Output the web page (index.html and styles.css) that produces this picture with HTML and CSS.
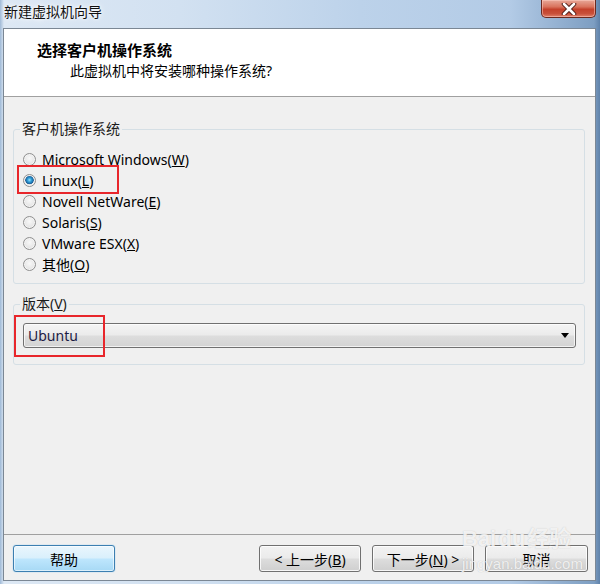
FILE: index.html
```html
<!DOCTYPE html>
<html lang="zh-CN">
<head>
    <meta charset="UTF-8">
    <title>新建虚拟机向导</title>
    <link rel="stylesheet" href="styles.css">
</head>
<body>

    <div class="window">
        <div class="titlebar">
            <span class="title">新建虚拟机向导</span>
            <div class="close-btn">
                <svg width="20" height="12" viewBox="0 0 20 12">
                    <path d="M5 1 L15 11 M15 1 L5 11" stroke="#4a1a14" stroke-width="4.5" stroke-linecap="round"/>
                    <path d="M5 1 L15 11 M15 1 L5 11" stroke="#ffffff" stroke-width="2.6" stroke-linecap="round"/>
                </svg>
            </div>
        </div>

        <div class="client">
            <!-- Header -->
            <div class="header">
                <h1>选择客户机操作系统</h1>
                <p>此虚拟机中将安装哪种操作系统?</p>
            </div>

            <!-- Guest OS -->
            <fieldset class="group os-group">
                <legend>客户机操作系统</legend>
                <label class="radio"><span class="dot"></span><span>Microsoft Windows(<u>W</u>)</span></label>
                <label class="radio marked"><span class="dot checked"></span><span>Linux(<u>L</u>)</span></label>
                <label class="radio"><span class="dot"></span><span>Novell NetWare(<u>E</u>)</span></label>
                <label class="radio"><span class="dot"></span><span>Solaris(<u>S</u>)</span></label>
                <label class="radio"><span class="dot"></span><span>VMware ESX(<u>X</u>)</span></label>
                <label class="radio"><span class="dot"></span><span>其他(<u>O</u>)</span></label>
            </fieldset>

            <!-- Version -->
            <fieldset class="group version-group">
                <legend>版本(<u>V</u>)</legend>
                <div class="select marked">
                    <span>Ubuntu</span>
                    <span class="arrow"></span>
                </div>
            </fieldset>

            <div class="footer">
                <button class="btn btn-default">帮助</button>
                <div class="nav-buttons">
                    <button class="btn">&lt; 上一步(<u>B</u>)</button>
                    <button class="btn">下一步(<u>N</u>) &gt;</button>
                    <button class="btn btn-cancel">取消</button>
                </div>
            </div>
        </div>

        <div class="watermark">
            <div class="wm-logo">Bai<span class="paw">du</span>经验</div>
            <div class="wm-url">jingyan.baidu.com</div>
        </div>
    </div>

</body>
</html>
```

FILE: styles.css
```css
body {
    margin: 0;
    width: 600px;
    height: 584px;
    overflow: hidden;
    font-family: "Noto Sans", "Noto Sans CJK SC", sans-serif;
    font-size: 14px;
    color: #000;
}

.window {
    position: relative;
    width: 600px;
    height: 584px;
    box-sizing: border-box;
    display: flex;
    flex-direction: column;
    background: linear-gradient(to right, #9fb9d6 0px, #dde8f4 4px, #d2e1f1 30%, #bcd2ea 60%, #b3cbe6 85%, #7d9ec2 99%, #5f82aa 100%);
}

.titlebar {
    height: 28px;
    display: flex;
    justify-content: space-between;
    align-items: flex-start;
    flex-shrink: 0;
}

.title {
    padding: 2px 0 0 4px;
    line-height: 20px;
    color: #101010;
    text-shadow: 0 0 6px #ffffff, 0 0 3px #ffffff;
}

.close-btn {
    width: 55px;
    height: 18px;
    margin-right: 4px;
    box-sizing: border-box;
    border: 1px solid #6b2a20;
    border-top: none;
    border-radius: 0 0 5px 5px;
    background: linear-gradient(to bottom, #e8a898 0%, #d9735d 40%, #c4412b 55%, #c8503a 80%, #e0806a 100%);
    box-shadow: inset 0 0 0 1px rgba(255, 210, 200, 0.5);
    display: flex;
    justify-content: center;
    align-items: center;
}

.client {
    flex: 1;
    margin: 0 4px 3px 3px;
    border: 1px solid #7b8794;
    background: #f0f0f0;
    display: flex;
    flex-direction: column;
}

.header {
    height: 68px;
    background: #fff;
    border-bottom: 1px solid #a0a0a0;
    padding: 11px 0 0 33px;
    box-sizing: border-box;
    flex-shrink: 0;
}

.header h1 {
    margin: 0;
    font-size: 15px;
    font-weight: bold;
    line-height: 20px;
}

.header p {
    margin: 1px 0 0 33px;
    line-height: 20px;
}

.group {
    margin: 22px 10px 0 9px;
    border: 1px solid #d5dfe5;
    border-radius: 3px;
    padding: 10px 8px 8px 9px;
    min-width: 0;
}

.group legend {
    margin-left: -3px;
    padding: 0 2px;
    line-height: 20px;
    color: #1a1a1a;
}

.version-group {
    margin-top: 10px;
    padding: 9px 8px 16px 9px;
}

.radio {
    position: relative;
    display: flex;
    align-items: center;
    gap: 6px;
    height: 21px;
    line-height: 21px;
}

.dot {
    width: 13px;
    height: 13px;
    box-sizing: border-box;
    border-radius: 50%;
    border: 1px solid #8f8f8f;
    background: radial-gradient(circle at 50% 40%, #f8f8f8 0%, #e8e8e8 55%, #d4d4d4 100%);
    box-shadow: inset 0 0 0 1px #f4f4f4;
    flex-shrink: 0;
}

.dot.checked {
    background: radial-gradient(circle at 50% 45%, #9ee0fb 0px, #2f9fd8 2px, #1a5e98 4px, #e6e6e6 4.6px, #f2f2f2 100%);
}

.marked::after {
    content: "";
    position: absolute;
    border: 2px solid #e8262b;
    box-sizing: border-box;
    pointer-events: none;
}

.radio.marked::after {
    left: -6px;
    top: -5px;
    width: 102px;
    height: 29px;
}

.select {
    position: relative;
    height: 25px;
    box-sizing: border-box;
    border: 1px solid #707070;
    border-radius: 3px;
    background: linear-gradient(to bottom, #f4f4f4 0%, #ebebeb 48%, #dddddd 52%, #d3d3d3 100%);
    box-shadow: inset 0 0 0 1px rgba(255, 255, 255, 0.7);
    display: flex;
    align-items: center;
    justify-content: space-between;
    padding: 0 6px 0 4px;
    color: #1c1c44;
}

.select.marked::after {
    left: -10px;
    top: -9px;
    width: 91px;
    height: 42px;
}

.arrow {
    width: 0;
    height: 0;
    border-left: 4px solid transparent;
    border-right: 4px solid transparent;
    border-top: 5px solid #000;
}

.footer {
    margin-top: auto;
    border-top: 1px solid #a0a0a0;
    padding: 10px 7px 8px 9px;
    display: flex;
    justify-content: space-between;
}

.nav-buttons {
    display: flex;
    gap: 11px;
}

.btn {
    width: 102px;
    height: 27px;
    padding: 0;
    font-family: inherit;
    font-size: 14px;
    color: #000;
    border: 1px solid #707070;
    border-radius: 3px;
    background: linear-gradient(to bottom, #f2f2f2 0%, #ebebeb 48%, #dddddd 52%, #cfcfcf 100%);
    box-shadow: inset 0 0 0 1px rgba(255, 255, 255, 0.8);
}

.btn-default {
    border-color: #3c7fb1;
    background: linear-gradient(to bottom, #eaf6fd 0%, #d9f0fc 48%, #bee6fd 52%, #a7d9f5 100%);
    box-shadow: inset 0 0 0 1px rgba(255, 255, 255, 0.6), 0 0 1px #48b0f0;
}

.btn-cancel {
    width: 103px;
}

.watermark {
    position: absolute;
    left: 462px;
    top: 526px;
    color: rgba(255, 255, 255, 0.8);
    text-shadow: 0 0 1px rgba(140, 140, 140, 0.5);
    pointer-events: none;
}

.wm-logo {
    font-family: "Liberation Sans", "Noto Sans CJK SC", sans-serif;
    font-size: 22px;
    font-weight: bold;
    line-height: 26px;
}

.paw {
    margin: 0 2px;
}

.wm-url {
    font-family: "Liberation Sans", sans-serif;
    font-size: 15px;
    line-height: 16px;
    margin-top: 4px;
}
```
